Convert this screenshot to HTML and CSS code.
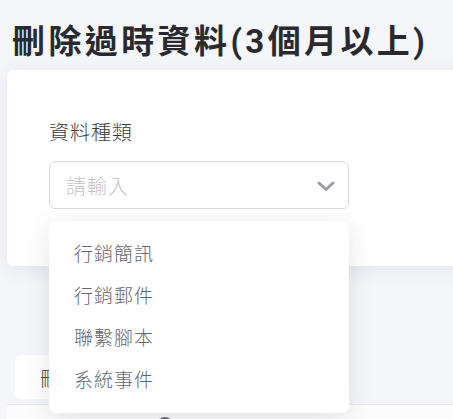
FILE: index.html
```html
<!DOCTYPE html>
<html lang="zh-Hant">
<head>
    <meta charset="UTF-8">
    <meta name="viewport" content="width=device-width, initial-scale=1.0">
    <title>刪除過時資料</title>
    <link rel="stylesheet" href="styles.css">
</head>
<body>
    <div class="page">
        <h1 class="title">刪除過時資料(3個月以上)</h1>

        <div class="card filter-card">
            <label class="field-label" for="dataType">資料種類</label>
            <div class="select">
                <div class="select-box" id="dataType">
                    <span class="placeholder">請輸入</span>
                    <svg class="chevron" width="18" height="11" viewBox="0 0 18 11">
                        <path d="M2 2 L9 8.5 L16 2" fill="none" stroke="currentColor" stroke-width="3" stroke-linecap="round" stroke-linejoin="round"/>
                    </svg>
                </div>
                <ul class="select-menu">
                    <li>行銷簡訊</li>
                    <li>行銷郵件</li>
                    <li>聯繫腳本</li>
                    <li>系統事件</li>
                </ul>
            </div>
        </div>

        <div class="toolbar">
            <button class="btn">刪除</button>
        </div>

        <div class="table-card">
            <span class="avatar"></span>
        </div>
    </div>
</body>
</html>
```

FILE: styles.css
```css
html, body { overflow: hidden; }
body { margin: 0; background: #f5f6fa; font-family: "Noto Sans CJK TC", "Noto Sans", sans-serif; color: #333; }
.page { padding: 0 0 0 7px; width: 480px; }

.title { margin: 22px 0 8px 5px; font-family: Roboto, "Noto Sans CJK TC", sans-serif; font-size: 33px; line-height: 40px; font-weight: 700; letter-spacing: 3.4px; color: #2a2a2e; }

.card { background: #fff; border-radius: 7px 0 0 7px; box-shadow: 0 4px 20px rgba(40, 40, 70, 0.08); }
.filter-card { padding: 50px 0 57px 42px; }

.field-label { display: block; margin-bottom: 17px; font-size: 20px; line-height: 24px; font-weight: 300; letter-spacing: 1px; color: #3a3a3e; }

.select { position: relative; width: 300px; }
.select-box { box-sizing: border-box; height: 48px; padding: 0 13px 0 16px; border: 1px solid #dadadf; border-radius: 6px; display: flex; align-items: center; justify-content: space-between; }
.placeholder { font-size: 20px; font-weight: 300; letter-spacing: 1px; color: #c2c2c9; }
.chevron { color: #9c9ca8; margin-top: 3px; }

.select-menu { position: absolute; top: 60px; left: 0; right: 0; z-index: 2; margin: 0; padding: 11px 0 13px; list-style: none; background: #fff; border-radius: 7px; box-shadow: 0 6px 24px rgba(40, 40, 70, 0.12); }
.select-menu li { height: 42px; line-height: 42px; padding-left: 25px; font-size: 19px; font-weight: 300; letter-spacing: 1px; color: #66666e; }

.toolbar { margin: 89px 0 5px 8px; }
.btn { height: 44px; padding: 0 25px; border: none; border-radius: 6px; background: #fff; font-family: inherit; font-size: 19px; font-weight: 300; letter-spacing: 1px; color: #333; }

.table-card { height: 40px; background: #fcfcfd; border-top: 1px solid #e8e8ee; padding: 12px 0 0 150px; }
.avatar { display: block; width: 16px; height: 16px; border-radius: 50%; background: #6c6c7a; }
```
